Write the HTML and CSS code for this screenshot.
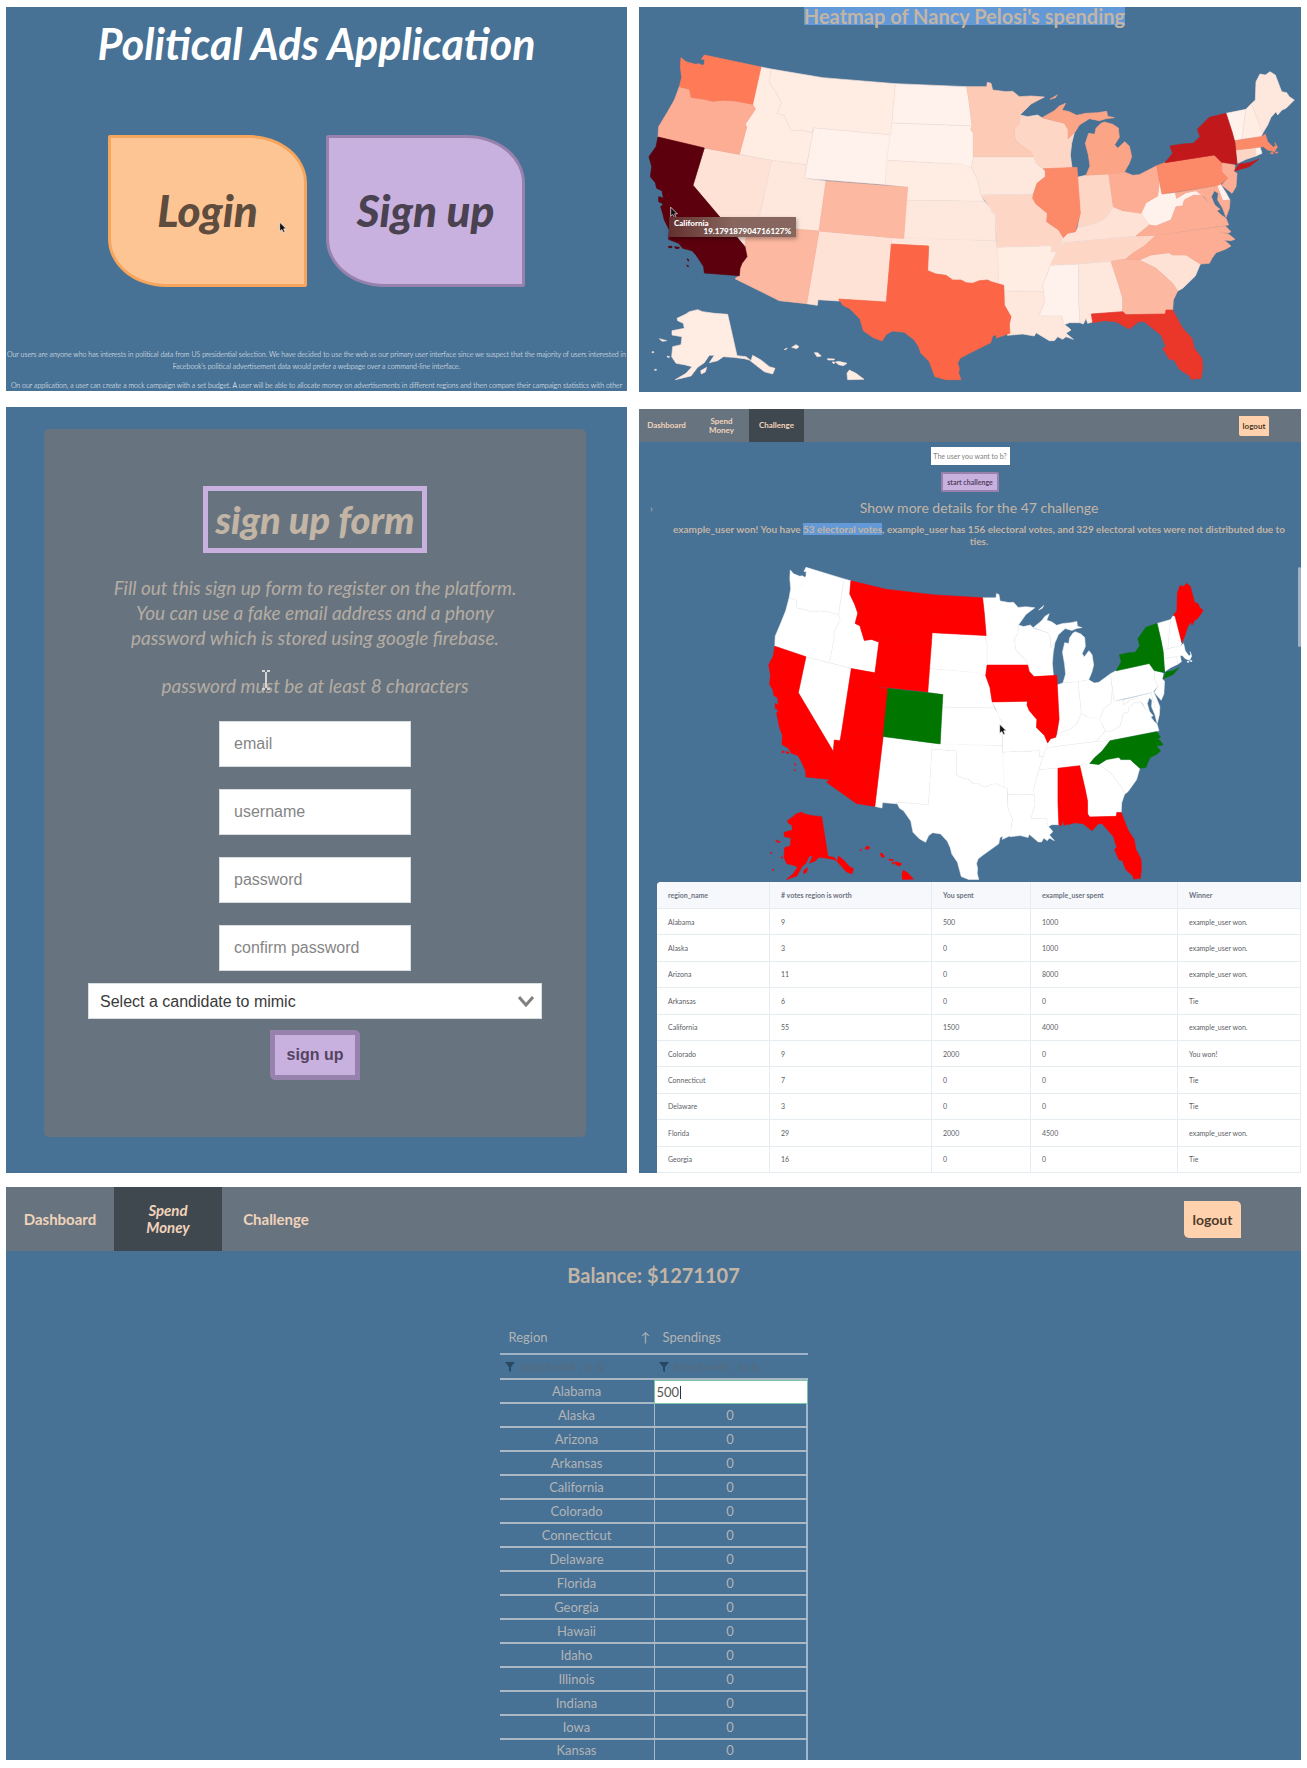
FILE: index.html
```html
<!DOCTYPE html>
<html lang="en">
<head>
<meta charset="utf-8">
<meta name="viewport" content="width=device-width, initial-scale=1">
<title>Political Ads Application</title>
<link rel="stylesheet" href="styles.css">
</head>
<body>
<svg class="defs" width="0" height="0" aria-hidden="true">
<defs>
<path id="wa" d="M135 173L150 185 178 193 188 191 202 197 195 212 184 226 177 222 190 207 205 192 206 178 196 178 205 165 375 201 350 313 300 303 262 301 230 304 205 298 165 292 161 268 130 260 137 232 133 200Z"/>
<path id="or" d="M130 260L161 268 165 292 205 298 230 304 262 301 300 303 350 313 358 328 328 372 332 382 310 463 205 444 66 411 68 380 95 335 115 300Z"/>
<path id="ca" d="M66 411L205 444 171 556 327 740 333 770 318 790 312 805 310 827 205 819 203 800 180 765 168 752 140 745 128 730 98 718 100 690 85 660 80 640 74 620 82 612 68 605 68 590 82 594 78 572 62 565 58 548 43 530 47 500 39 470 60 440ZM98 739h10v4h-10zM116 740l14 2-2 4-10-1zM153 776l6 4-2 4zM152 795l6 3-2 3z"/>
<path id="nv" d="M205 444L407 481 364 678 357 706 331 704 327 740 171 556Z"/>
<path id="id" d="M375 201L405 207 400 248 422 280 436 308 424 340 445 347 465 393 498 390 528 398 531 396 512 494 407 481 310 463 332 382 328 372 358 328 350 313Z"/>
<path id="mt" d="M405 207L560 233 778 251 764 404 533 383 528 398 498 390 465 393 445 347 424 340 436 308 422 280 400 248Z"/>
<path id="nd" d="M778 251L992 260 1000 310 1008 378 767 369Z"/>
<path id="sd" d="M767 369L1008 378 1004 388 1012 400 1012 470 1006 503 960 493 752 481Z"/>
<path id="ne" d="M752 481L950 492 975 492 1006 503 1025 540 1035 585 1045 604 810 601 815 562 748 554Z"/>
<path id="wy" d="M533 383L764 404 748 554 505 535Z"/>
<path id="ut" d="M407 481L512 494 505 535 570 543 549 693 364 678Z"/>
<path id="co" d="M570 543L815 562 803 716 549 693Z"/>
<path id="az" d="M364 678L549 693 512 911 430 902 297 836 310 827 312 805 318 790 333 770 327 740 331 704 357 706Z"/>
<path id="nm" d="M549 693L768 713 751 906 608 897 610 903 546 899 544 916 512 911Z"/>
<path id="ks" d="M810 601L1045 604 1060 620 1070 625 1066 635 1078 642 1080 722 803 716Z"/>
<path id="ok" d="M768 713L1080 722 1082 742 1087 790 1088 852 1065 845 1055 840 1030 842 1010 850 990 848 975 840 950 840 930 826 900 822 875 812 878 738 766 732Z"/>
<path id="tx" d="M766 732L878 738 875 812 900 822 930 826 950 840 975 840 990 848 1010 850 1030 842 1055 840 1065 845 1103 856 1105 915 1125 950 1120 972 1122 1000 1080 1014 1082 1004 1070 1008 1064 1028 1030 1045 990 1065 972 1075 965 1090 970 1105 968 1120 975 1139 930 1139 897 1130 880 1085 855 1060 848 1040 835 1020 805 997 770 993 752 1002 738 1023 710 1012 682 992 672 957 640 925 622 917 608 897 751 906Z"/>
<path id="mn" d="M992 260L1052 260 1054 247 1065 250 1070 270 1110 275 1130 274 1150 290 1185 288 1225 291 1185 312 1152 345 1150 370 1135 388 1138 420 1155 435 1185 455 1193 470 1012 470 1012 400 1004 388 1008 378 1000 310Z"/>
<path id="wi" d="M1152 345L1175 350 1205 345 1220 355 1285 370 1296 388 1296 416 1315 398 1307 430 1303 465 1308 503 1222 506 1200 490 1193 470 1185 455 1155 435 1138 420 1135 388 1150 370Z"/>
<path id="mi" d="M1218 353L1255 332 1270 318 1289 310 1278 330 1300 335 1322 346 1350 340 1385 338 1412 334 1415 349 1435 353 1410 356 1390 362 1360 356 1330 375 1318 395 1296 416 1296 388 1285 370ZM1242 298L1262 286 1264 284 1258 293ZM1395 370L1405 366 1430 373 1447 384 1450 412 1436 434 1445 445 1466 425 1480 438 1487 470 1480 490 1465 516 1420 522 1350 526 1362 498 1357 465 1348 430 1358 400 1376 403 1380 385Z"/>
<path id="ia" d="M1012 470L1193 470 1200 490 1228 512 1228 530 1203 550 1192 583 1035 585 1025 540 1006 503Z"/>
<path id="il" d="M1222 506L1323 502 1333 640 1325 670 1318 695 1295 700 1282 713 1268 690 1232 665 1234 640 1200 612 1190 595 1192 583 1203 550 1228 530 1228 512Z"/>
<path id="mo" d="M1035 585L1192 583 1190 595 1200 612 1234 640 1232 665 1268 690 1282 713 1275 730 1262 755 1245 755 1248 737 1082 742 1078 642 1066 635 1060 620Z"/>
<path id="ar" d="M1082 742L1248 737 1245 755 1262 755 1243 796 1230 830 1220 855 1222 875 1105 873 1103 856 1088 852Z"/>
<path id="la" d="M1105 873L1222 875 1226 905 1208 948 1277 948 1283 972 1300 985 1305 990 1290 1000 1312 1018 1290 1010 1280 1018 1265 1010 1255 1022 1240 1022 1200 998 1195 1008 1160 1002 1114 1006 1125 950 1105 915Z"/>
<path id="ms" d="M1243 796L1328 792 1328 900 1332 968 1300 968 1283 975 1277 948 1208 948 1226 905 1222 875 1220 855 1230 830Z"/>
<path id="al" d="M1328 792L1425 784 1450 860 1460 895 1460 935 1366 942 1373 965 1355 970 1350 955 1342 972 1332 968 1328 900Z"/>
<path id="tn" d="M1275 730L1310 725 1500 708 1560 706 1525 738 1490 760 1470 777 1425 784 1328 792 1243 796 1262 755Z"/>
<path id="ky" d="M1282 713L1295 700 1318 695 1325 684 1380 670 1410 655 1432 620 1460 632 1515 633 1525 655 1540 675 1500 708 1310 725 1275 730Z"/>
<path id="in" d="M1323 532L1350 526 1418 522 1432 620 1410 655 1380 670 1325 684 1333 640Z"/>
<path id="oh" d="M1418 522L1465 516 1490 526 1510 524 1562 497 1570 545 1565 588 1530 608 1515 640 1460 632 1432 620Z"/>
<path id="wv" d="M1570 545L1578 582 1618 578 1622 595 1650 578 1680 572 1695 578 1698 586 1672 586 1645 600 1640 618 1620 620 1605 660 1560 678 1540 675 1525 655 1515 640 1530 608 1565 588Z"/>
<path id="pa" d="M1562 497L1586 488 1735 465 1757 487 1757 515 1775 535 1750 555 1578 582Z"/>
<path id="ny" d="M1587 488L1610 460 1602 438 1640 432 1672 430 1692 410 1684 388 1720 352 1770 340 1788 395 1797 430 1803 493 1757 487 1735 465ZM1795 513L1810 492 1840 488 1868 478 1840 500Z"/>
<path id="vt" d="M1770 340L1830 328 1825 360 1818 418 1797 422 1788 395Z"/>
<path id="nh" d="M1830 328L1842 315 1850 318 1880 400 1875 410 1818 418 1825 360Z"/>
<path id="me" d="M1842 315L1858 300 1860 245 1872 222 1888 225 1902 215 1918 225 1937 275 1952 278 1960 290 1975 300 1950 325 1938 330 1925 345 1920 335 1905 352 1895 375 1880 400 1850 318Z"/>
<path id="ma" d="M1797 422L1875 410 1888 403 1895 425 1912 442 1920 436 1917 428 1924 442 1915 455 1895 450 1882 440 1800 450ZM1904 458h8v3h-8zM1918 456h7v3h-7z"/>
<path id="ct" d="M1800 450L1858 443 1860 468 1830 478 1805 490Z"/>
<path id="ri" d="M1858 443L1872 440 1878 460 1860 468Z"/>
<path id="nj" d="M1757 487L1797 495 1795 515 1803 520 1800 560 1788 580 1765 562 1757 555 1775 535 1757 515Z"/>
<path id="de" d="M1743 557L1752 550 1770 578 1782 600 1760 602Z"/>
<path id="md" d="M1618 578L1743 557 1760 602 1782 600 1780 625 1770 652 1760 625 1745 600 1747 580 1735 572 1726 590 1738 620 1720 610 1705 590 1698 586 1680 572 1650 578 1622 595Z"/>
<path id="va" d="M1698 586L1720 610 1735 614 1752 628 1742 632 1756 645 1770 655 1778 675 1560 706 1500 708 1540 675 1560 678 1605 660 1620 620 1640 618 1645 600 1672 586Z"/>
<path id="nc" d="M1560 706L1768 678 1785 695 1775 700 1750 694 1780 704 1797 718 1784 722 1765 720 1785 738 1768 748 1740 758 1728 775 1720 790 1693 792 1650 765 1608 765 1600 758 1545 765 1510 780 1470 777 1490 760 1525 738Z"/>
<path id="sc" d="M1510 780L1545 765 1600 758 1608 765 1650 765 1693 792 1678 828 1640 865 1625 873 1610 850 1560 805Z"/>
<path id="ga" d="M1425 784L1470 777 1510 780 1560 805 1610 850 1625 873 1612 900 1610 930 1590 930 1588 942 1470 944 1460 935 1460 895 1450 860Z"/>
<path id="fl" d="M1366 942L1460 935 1470 944 1588 942 1590 930 1610 930 1640 985 1668 1015 1675 1045 1698 1075 1700 1105 1695 1135 1665 1138 1662 1128 1630 1108 1615 1080 1600 1078 1580 1045 1590 1040 1575 1005 1525 965 1508 965 1480 987 1440 965 1405 962 1370 968Z"/>
<path id="ak" d="M123 955L150 942 160 935 185 929 200 935 235 940 275 943 303 1067 330 1070 345 1082 350 1066 375 1080 400 1100 417 1105 410 1122 385 1115 340 1080 325 1076 290 1072 262 1070 245 1082 220 1088 235 1066 220 1066 205 1088 185 1102 165 1128 118 1139 150 1120 168 1100 145 1094 120 1090 107 1070 110 1040 135 1034 138 1010 108 1005 108 992 145 985 142 970 125 962ZM70 1016L92 1022 78 1024ZM93 1068l8 2-4 4zM194 1112L212 1102 208 1116 196 1122ZM48 1055h5v3h-5zM56 1108h5v3h-5z"/>
<path id="hi" d="M467 1042L480 1034 489 1040 482 1046ZM445 1048L454 1044 448 1050ZM535 1058L545 1058 556 1068 543 1070ZM574 1076L596 1077 594 1080 576 1080ZM588 1086L596 1086 594 1092ZM598 1086L608 1084 633 1090 622 1097 608 1094ZM633 1120L640 1110 660 1120 684 1138 635 1139Z"/>
<path id="cursor" d="M1 1V15L4 12 7 17 9 16 7 11H11Z"/>
<path id="beam" d="M1 1H4M6 1H9M5 2V18M1 19H4M6 19H9"/>
<path id="funnel" d="M0 0H10L6 5V10L4 9V5Z"/>
</defs>
</svg>

<main class="gallery">
  <section class="panel welcome">
    <h1 class="app-title">Political Ads Application</h1>
    <div class="choices">
      <button class="choice choice-login" type="button">Login</button>
      <button class="choice choice-signup" type="button">Sign up</button>
      <svg class="pointer pointer-login" viewBox="0 0 12 18" aria-hidden="true"><use href="#cursor"/></svg>
    </div>
    <div class="intro">
      <p>Our users are anyone who has interests in political data from US presidential selection. We have decided to use the web as our primary user interface since we suspect that the majority of users interested in<br>Facebook's political advertisement data would prefer a webpage over a command-line interface.</p>
      <p>On our application, a user can create a mock campaign with a set budget. A user will be able to allocate money on advertisements in different regions and then compare their campaign statistics with other</p>
    </div>
  </section>

  <section class="panel heatmap">
    <h2 class="heatmap-title"><mark>Heatmap of Nancy Pelosi's spending</mark></h2>
    <svg class="map" viewBox="9 75 1986 1101" role="img" aria-label="Spending by state">
      <g class="h0"><use href="#wy"/><use href="#nd"/><use href="#sd"/><use href="#wv"/><use href="#vt"/><use href="#ri"/><use href="#de"/><use href="#ms"/></g>
      <g class="h1"><use href="#id"/><use href="#mt"/><use href="#ak"/><use href="#hi"/><use href="#ne"/><use href="#nh"/><use href="#ar"/></g>
      <g class="h2"><use href="#ut"/><use href="#ks"/><use href="#ok"/><use href="#ia"/><use href="#la"/><use href="#al"/><use href="#me"/></g>
      <g class="h3"><use href="#nv"/><use href="#nm"/><use href="#ky"/><use href="#sc"/></g>
      <g class="h4"><use href="#mo"/><use href="#tn"/><use href="#in"/><use href="#wi"/><use href="#ct"/></g>
      <g class="h5"><use href="#mn"/></g>
      <g class="h6"><use href="#co"/><use href="#az"/><use href="#ga"/></g>
      <g class="h7"><use href="#or"/><use href="#oh"/><use href="#nj"/><use href="#md"/><use href="#va"/><use href="#nc"/></g>
      <g class="h8"><use href="#mi"/></g>
      <g class="h9"><use href="#pa"/><use href="#ma"/><use href="#il"/></g>
      <g class="h10"><use href="#wa"/></g>
      <g class="h11"><use href="#tx"/></g>
      <g class="h12"><use href="#fl"/></g>
      <g class="h13"><use href="#ny"/></g>
      <g class="h14"><use href="#ca"/></g>
    </svg>
    <svg class="pointer pointer-map" viewBox="0 0 12 18" aria-hidden="true"><use href="#cursor"/></svg>
    <div class="tip"><span>California</span><span class="tip-value">19.179187904716127%</span></div>
  </section>

  <section class="panel signup">
    <form class="card">
      <h2 class="card-title">sign up form</h2>
      <p class="card-text">Fill out this sign up form to register on the platform.<br>You can use a fake email address and a phony<br>password which is stored using google firebase.</p>
      <p class="card-text">password must be at least 8 characters</p>
      <div class="fields">
        <input class="field" type="email" placeholder="email" aria-label="email">
        <input class="field" type="text" placeholder="username" aria-label="username">
        <input class="field" type="password" placeholder="password" aria-label="password">
        <input class="field" type="password" placeholder="confirm password" aria-label="confirm password">
      </div>
      <div class="select-wrap">
        <select class="candidate" aria-label="Candidate"><option>Select a candidate to mimic</option></select>
        <svg class="chevron" viewBox="0 0 16 12" aria-hidden="true"><path d="M1 2L8 10L15 2"/></svg>
      </div>
      <button class="submit" type="button">sign up</button>
      <svg class="beam beam-form" viewBox="0 0 10 20" aria-hidden="true"><use href="#beam"/></svg>
    </form>
  </section>

  <section class="panel challenge">
    <nav class="nav nav-small">
      <a class="tab" href="#dashboard">Dashboard</a>
      <a class="tab" href="#spend">Spend<br>Money</a>
      <a class="tab active" href="#challenge">Challenge</a>
      <button class="logout" type="button">logout</button>
    </nav>
    <div class="challenge-form">
      <input class="rival" type="text" placeholder="The user you want to b?" aria-label="Rival user">
      <button class="submit start" type="button">start challenge</button>
    </div>
    <div class="details">
      <span class="marker">›</span>
      <h2 class="details-title">Show more details for the 47 challenge</h2>
    </div>
    <p class="result">example_user won! You have <mark>53 electoral votes</mark>, example_user has 156 electoral votes, and 329 electoral votes were not distributed due to<br>ties.</p>
    <svg class="map result-map" viewBox="-539 114 2950 1033" preserveAspectRatio="none" role="img" aria-label="Winner by state">
      <g class="tie"><use href="#wa"/><use href="#or"/><use href="#id"/><use href="#nv"/><use href="#nm"/><use href="#tx"/><use href="#ok"/><use href="#ks"/><use href="#ne"/><use href="#sd"/><use href="#mn"/><use href="#wi"/><use href="#mi"/><use href="#mo"/><use href="#ar"/><use href="#la"/><use href="#ms"/><use href="#tn"/><use href="#ky"/><use href="#in"/><use href="#oh"/><use href="#wv"/><use href="#pa"/><use href="#vt"/><use href="#nh"/><use href="#ma"/><use href="#ct"/><use href="#ri"/><use href="#nj"/><use href="#de"/><use href="#md"/><use href="#va"/><use href="#sc"/><use href="#ga"/></g>
      <g class="lost"><use href="#ca"/><use href="#mt"/><use href="#nd"/><use href="#wy"/><use href="#ut"/><use href="#az"/><use href="#ak"/><use href="#hi"/><use href="#ia"/><use href="#il"/><use href="#al"/><use href="#fl"/><use href="#me"/></g>
      <g class="won"><use href="#co"/><use href="#ny"/><use href="#nc"/></g>
    </svg>
    <svg class="pointer pointer-result" viewBox="0 0 12 18" aria-hidden="true"><use href="#cursor"/></svg>
    <span class="scroll-thumb"></span>
    <table class="votes">
      <colgroup><col class="c-region"><col class="c-votes"><col class="c-you"><col class="c-rival"><col class="c-winner"></colgroup>
      <thead><tr><th>region_name</th><th># votes region is worth</th><th>You spent</th><th>example_user spent</th><th>Winner</th></tr></thead>
      <tbody>
        <tr><td>Alabama</td><td>9</td><td>500</td><td>1000</td><td>example_user won.</td></tr>
        <tr><td>Alaska</td><td>3</td><td>0</td><td>1000</td><td>example_user won.</td></tr>
        <tr><td>Arizona</td><td>11</td><td>0</td><td>8000</td><td>example_user won.</td></tr>
        <tr><td>Arkansas</td><td>6</td><td>0</td><td>0</td><td>Tie</td></tr>
        <tr><td>California</td><td>55</td><td>1500</td><td>4000</td><td>example_user won.</td></tr>
        <tr><td>Colorado</td><td>9</td><td>2000</td><td>0</td><td>You won!</td></tr>
        <tr><td>Connecticut</td><td>7</td><td>0</td><td>0</td><td>Tie</td></tr>
        <tr><td>Delaware</td><td>3</td><td>0</td><td>0</td><td>Tie</td></tr>
        <tr><td>Florida</td><td>29</td><td>2000</td><td>4500</td><td>example_user won.</td></tr>
        <tr><td>Georgia</td><td>16</td><td>0</td><td>0</td><td>Tie</td></tr>
      </tbody>
    </table>
  </section>

  <section class="panel spend">
    <nav class="nav">
      <a class="tab" href="#dashboard">Dashboard</a>
      <a class="tab active" href="#spend"><em>Spend<br>Money</em></a>
      <a class="tab" href="#challenge">Challenge</a>
      <button class="logout" type="button">logout</button>
    </nav>
    <h2 class="balance">Balance: $1271107</h2>
    <table class="spendings">
      <thead>
        <tr class="names"><th><span class="sortable">Region <span>↑</span></span></th><th>Spendings</th></tr>
        <tr class="filters">
          <td><label class="filter"><svg class="funnel" viewBox="0 0 10 10" aria-hidden="true"><use href="#funnel"/></svg><input type="text" placeholder="Search with , or &amp;" aria-label="Filter region"></label></td>
          <td><label class="filter"><svg class="funnel" viewBox="0 0 10 10" aria-hidden="true"><use href="#funnel"/></svg><input type="text" placeholder="Search with , to &amp;" aria-label="Filter spendings"></label></td>
        </tr>
      </thead>
      <tbody>
        <tr><td>Alabama</td><td class="editing"><input class="amount" type="text" value="500" aria-label="Alabama spending"><span class="caret"></span></td></tr>
        <tr><td>Alaska</td><td>0</td></tr>
        <tr><td>Arizona</td><td>0</td></tr>
        <tr><td>Arkansas</td><td>0</td></tr>
        <tr><td>California</td><td>0</td></tr>
        <tr><td>Colorado</td><td>0</td></tr>
        <tr><td>Connecticut</td><td>0</td></tr>
        <tr><td>Delaware</td><td>0</td></tr>
        <tr><td>Florida</td><td>0</td></tr>
        <tr><td>Georgia</td><td>0</td></tr>
        <tr><td>Hawaii</td><td>0</td></tr>
        <tr><td>Idaho</td><td>0</td></tr>
        <tr><td>Illinois</td><td>0</td></tr>
        <tr><td>Indiana</td><td>0</td></tr>
        <tr><td>Iowa</td><td>0</td></tr>
        <tr><td>Kansas</td><td>0</td></tr>
      </tbody>
    </table>
  </section>
</main>
</body>
</html>
```
FILE: styles.css
```css
:root {
  --blue: #477195;
  --slate: #67747f;
  --dark: #40484f;
  --sand: #c3b5a5;
  --peach: #ffd2ad;
  --lilac: #c8b1df;
  --plum: #9782ad;
  --select: #6399d6;
}

* { box-sizing: border-box; }

body {
  margin: 0;
  background: #fff;
  font-family: Lato, "Liberation Sans", sans-serif;
  color: var(--sand);
}

h1, h2, p { margin: 0; }
button, input, select { font-family: inherit; }
mark { background: var(--select); color: inherit; }
.defs { position: absolute; }

.gallery {
  display: grid;
  grid-template-columns: 621fr 662fr;
  column-gap: 12px;
  padding: 7px 6px;
}

.panel {
  position: relative;
  background: var(--blue);
  overflow: hidden;
  min-width: 0;
}

.pointer {
  position: absolute;
  width: 8px;
  height: 13px;
  fill: #111;
  stroke: #fff;
  stroke-width: 1px;
}

/* Welcome */
.welcome { text-align: center; color: #fff; padding-top: 12px; margin-bottom: 16px; }
.app-title { font-size: 43px; line-height: 50px; font-style: italic; font-weight: 700; margin-bottom: 66px; }
.choices { display: flex; justify-content: center; gap: 19px; position: relative; margin-bottom: 61px; }
.choice {
  width: 199px;
  height: 152px;
  padding: 0 0 3px;
  border: 3px solid;
  border-radius: 2px 58px 2px 58px / 2px 48px 2px 48px;
  font-size: 44px;
  font-style: italic;
  font-weight: 900;
}
.choice-login { background: #fec594; border-color: #f6a55d; color: #5e4c3f; }
.choice-signup { background: var(--lilac); border-color: var(--plum); color: #4a4151; }
.pointer-login { left: 44%; top: 86px; }
.intro {
  display: grid;
  justify-content: center;
  gap: 7px;
  font-size: 7px;
  line-height: 12px;
  font-weight: 300;
  white-space: nowrap;
  color: #fff;
}

/* Heatmap */
.heatmap { margin-bottom: 15px; }
.heatmap-title { display: flex; justify-content: center; padding-right: 11px; font-size: 20px; line-height: 18px; }
.map { display: block; width: 100%; }
.map g { fill: currentColor; stroke: currentColor; stroke-width: 2px; }
.map .h0, .map .h1, .map .h2, .map .h3, .map .h4 { stroke: #f7e3da; }
.h0 { color: #fff1eb; }
.h1 { color: #ffede4; }
.h2 { color: #fee8dd; }
.h3 { color: #fee2d6; }
.h4 { color: #fed6c6; }
.h5 { color: #fdcab5; }
.h6 { color: #fcb8a0; }
.h7 { color: #fcad94; }
.h8 { color: #fca486; }
.h9 { color: #fc8a69; }
.h10 { color: #ff7b58; }
.h11 { color: #fc6647; }
.h12 { color: #ea372a; }
.h13 { color: #c1191b; }
.h14 { color: #5c000d; }
.pointer-map { left: 31px; top: 199px; }
.tip {
  position: absolute;
  left: 30px;
  top: 210px;
  width: 127px;
  padding: 2px 5px;
  display: grid;
  font-size: 8px;
  line-height: 8px;
  font-weight: 900;
  color: #fff;
  background: linear-gradient(90deg, #64302f, #86665e 50%);
  box-shadow: 1px 2px 4px rgba(0, 0, 0, .3);
}
.tip-value { text-align: right; }

/* Sign up */
.signup { padding: 22px 41px 36px 38px; margin-bottom: 14px; }
.card {
  position: relative;
  display: flex;
  flex-direction: column;
  align-items: center;
  padding: 57px 44px;
  background: var(--slate);
  border-radius: 5px;
}
.card-title {
  border: 5px solid var(--lilac);
  padding: 0 8px;
  font-size: 38px;
  line-height: 57px;
  font-style: italic;
  font-weight: 900;
  margin-bottom: 22px;
}
.card-text {
  font-size: 19px;
  line-height: 25px;
  font-style: italic;
  text-align: center;
  white-space: nowrap;
  color: #b5aca3;
  margin-bottom: 23px;
}
.fields { display: grid; gap: 22px; margin-bottom: 12px; }
.field {
  width: 192px;
  height: 46px;
  padding: 0 14px;
  border: 1px solid #d8dde0;
  background: #fff;
  font-family: "Liberation Sans", sans-serif;
  font-size: 16px;
}
.field::placeholder { color: #858585; }
.select-wrap { position: relative; align-self: stretch; margin-bottom: 11px; }
.candidate {
  display: block;
  width: 100%;
  height: 36px;
  padding: 0 11px;
  border: 1px solid #d8dde0;
  background: #fff;
  appearance: none;
  font-family: "Liberation Sans", sans-serif;
  font-size: 16px;
  color: #3a3a3a;
}
.chevron { position: absolute; right: 8px; top: 12px; width: 16px; height: 12px; fill: none; stroke: #808080; stroke-width: 3px; }
.submit {
  height: 50px;
  padding: 0 12px;
  border: 5px solid var(--plum);
  border-radius: 0 5px 0 5px;
  background: var(--lilac);
  color: #55445f;
  font-family: "Liberation Sans", sans-serif;
  font-size: 16px;
  font-weight: 700;
}
.beam { position: absolute; fill: none; stroke: #d5d5d5; stroke-width: 2px; }
.beam-form { left: 40%; top: 240px; width: 10px; height: 22px; }

/* Navigation */
.nav { display: flex; align-items: stretch; height: 64px; background: var(--slate); padding-right: 60px; }
.tab {
  display: flex;
  align-items: center;
  justify-content: center;
  width: 108px;
  text-align: center;
  text-decoration: none;
  font-size: 15px;
  line-height: 17px;
  font-weight: 700;
  color: #f0d3bb;
}
.tab.active { background: var(--dark); }
.logout {
  align-self: center;
  margin-left: auto;
  width: 57px;
  height: 37px;
  padding: 0;
  border: 0;
  border-radius: 0 5px 0 5px;
  background: var(--peach);
  color: #4d3a2c;
  font-size: 14px;
  font-weight: 700;
}
.nav-small { height: 33px; padding-right: 32px; }
.nav-small .tab { width: 55px; font-size: 8px; line-height: 9px; }
.nav-small .logout { width: 30px; height: 20px; font-size: 8px; border-radius: 0 2px 0 2px; }

/* Challenge */
.challenge { display: flex; flex-direction: column; margin-bottom: 14px; margin-top: 2px; }
.challenge-form { display: grid; justify-items: center; gap: 7px; padding: 5px 0 6px; }
.rival {
  width: 79px;
  height: 18px;
  padding: 0 2px;
  border: 0;
  background: #fff;
  text-align: center;
  font-size: 7px;
}
.rival::placeholder { color: #808080; }
.start { height: 20px; padding: 0 4px; border-width: 2px; border-radius: 0 2px 0 2px; font-family: Lato, sans-serif; font-size: 7px; }
.details { display: flex; padding-left: 11px; margin-bottom: 5px; line-height: 20px; }
.marker { width: 7px; font-size: 10px; }
.details-title { flex: 1; font-size: 14px; font-weight: 400; text-align: center; }
.result { padding: 0 2px 0 20px; font-size: 10px; line-height: 12px; font-weight: 700; text-align: center; margin-bottom: 4px; }
.result-map { aspect-ratio: 2 / 1; }
.map .tie { fill: #fff; stroke: #f6f6f6; }
.lost { color: #f00; }
.won { color: #007500; }
.pointer-result { left: 360px; top: 314px; }
.scroll-thumb { position: absolute; right: 0; top: 158px; width: 3px; height: 80px; border-radius: 2px; background: #9fb3c4; }
.votes {
  flex: 1;
  align-self: stretch;
  margin-left: 18px;
  table-layout: fixed;
  border-spacing: 0;
  background: #fff;
  border-radius: 4px 0 0 0;
  overflow: hidden;
  font-size: 7px;
  color: #5b6065;
}
.votes th, .votes td {
  height: 26px;
  padding: 0 11px;
  text-align: left;
  white-space: nowrap;
  border-bottom: 1px solid #e6edf0;
  border-right: 1px solid #e6edf0;
}
.votes th { height: 27px; background: #f7f8fb; font-weight: 700; color: #6c7482; }
.c-region { width: 113px; }
.c-votes { width: 162px; }
.c-you { width: 99px; }
.c-rival { width: 147px; }

/* Spend money */
.spend { grid-column: 1 / -1; display: flex; flex-direction: column; }
.balance { font-size: 20px; line-height: 24px; text-align: center; margin: 12px 0 34px; }
.spendings {
  align-self: center;
  width: 308px;
  table-layout: fixed;
  border-spacing: 0;
  font-size: 13px;
  line-height: 22px;
  text-align: center;
  color: #b3b5b5;
}
.spendings th { height: 34px; padding: 0 9px; text-align: left; font-weight: 400; border-bottom: 2px solid #9fb2c6; }
.sortable { display: flex; justify-content: space-between; margin-right: -6px; }
.spendings td { height: 24px; padding: 0; border-bottom: 2px solid #a9b8c4; }
.spendings .filters td { height: 25px; }
.spendings tbody td + td { border-left: 1px solid #a9b8c4; border-right: 2px solid #9fb8cf; }
.spendings tbody tr:last-child td { border-bottom: 0; height: 20px; line-height: 20px; }
.filter { display: flex; align-items: center; gap: 5px; padding-left: 5px; }
.filter input { width: 110px; padding: 0; border: 0; background: none; font-size: 11px; line-height: 14px; }
.filter input::placeholder { color: #586b7b; opacity: 1; }
.funnel { width: 10px; height: 10px; fill: #294963; }
.spendings .editing { position: relative; border: 1px solid #7cc5a8; background: #fff; }
.amount { display: block; width: 100%; height: 22px; padding: 0 2px; border: 0; background: #fff; color: #555; font-size: 13px; }
.caret { position: absolute; left: 25px; top: 5px; width: 1px; height: 13px; background: #333; }
```
